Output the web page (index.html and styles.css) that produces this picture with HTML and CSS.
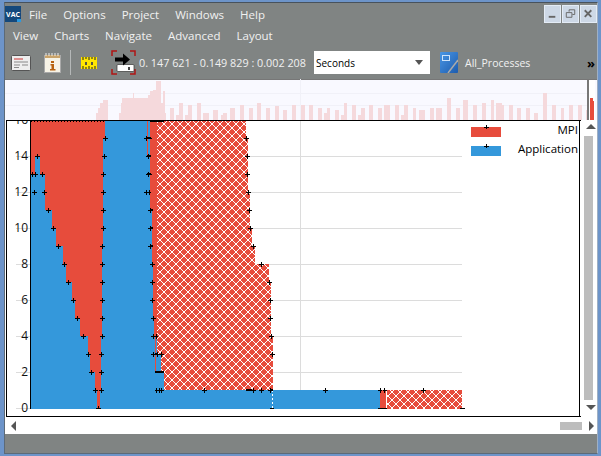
FILE: index.html
```html
<!DOCTYPE html>
<html lang="en">
<head>
<meta charset="UTF-8">
<title>Vampir</title>
<link rel="stylesheet" href="styles.css">
</head>
<body>
<div class="window">
<div class="menu-row main-menu">
<svg class="logo" width="16" height="16" viewBox="0 0 16 16"><rect width="16" height="16" fill="#14487c"/><rect x="12" y="13" width="4" height="3" fill="#2a9ae0"/><text x="8" y="11" class="logo-text">VAC</text></svg>
<span class="menu-item">File</span>
<span class="menu-item">Options</span>
<span class="menu-item">Project</span>
<span class="menu-item">Windows</span>
<span class="menu-item">Help</span>
<div class="win-btns">
<div class="win-btn"><svg width="16" height="16" viewBox="0 0 16 16"><rect x="4" y="10" width="7" height="2" fill="#666"/></svg></div>
<div class="win-btn"><svg width="16" height="16" viewBox="0 0 16 16"><path d="M6.500 5.500V3.500H12.500V8.500H10M3.500 6.500H9.500V11.500H3.500Z" fill="none" stroke="#666"/></svg></div>
<div class="win-btn"><svg width="16" height="16" viewBox="0 0 16 16"><path d="M4 4L11 11M11 4L4 11" stroke="#666" stroke-width="2"/></svg></div>
</div>
</div>
<div class="menu-row sub-menu">
<span class="menu-item">View</span>
<span class="menu-item">Charts</span>
<span class="menu-item">Navigate</span>
<span class="menu-item">Advanced</span>
<span class="menu-item">Layout</span>
</div>
<div class="toolbar">
<svg class="tb-card" width="20" height="16" viewBox="0 0 20 16"><rect x=".5" y=".5" width="19" height="15" rx="1" fill="#eee" stroke="#555"/><path d="M3 4H12" stroke="#c33"/><path d="M3 7H17M3 10H9M11 10H17M3 12.500H8" stroke="#888"/></svg>
<svg class="tb-info" width="17" height="20" viewBox="0 0 17 20"><rect x=".5" y="2.500" width="16" height="17" fill="#f7f3e6" stroke="#aaa"/><rect x="1" y="2" width="15" height="3" fill="#c9a36a"/><path d="M2 0V3M5 0V3M8 0V3M11 0V3M14 0V3" stroke="#eee"/><path d="M7 8H10V10H7ZM6.500 11H10V16H11.500V17.500H6V16H7.500V12.500H6.500Z" fill="#b8620f"/></svg>
<div class="tb-sep"></div>
<svg class="tb-ruler" width="16" height="12" viewBox="0 0 16 12"><rect width="16" height="12" fill="#ffe600"/><path d="M2 0V3M5 0V2M8 0V3M11 0V2M14 0V3M2 12V9M5 12V10M8 12V9M11 12V10M14 12V9" stroke="#222"/><rect x="4" y="5" width="2" height="3" fill="#554"/><rect x="10" y="5" width="2" height="3" fill="#554"/></svg>
<svg class="tb-zoom" width="25" height="25" viewBox="0 0 25 25"><path d="M1 6V1H6M19 1H24V6M1 19V24H6M19 24H24V19" fill="none" stroke="#b01515" stroke-width="1.500"/><rect x="6" y="14.500" width="17" height="7" rx="1" fill="#fff" stroke="#333" stroke-width=".7"/><rect x="17" y="17" width="2" height="3" fill="#444"/><path d="M4 7.500H12V3.500L19 9.500L12 15.500V11.500H4Z" fill="#000"/></svg>
<span class="time-range">0. 147 621 - 0.149 829 : 0.002 208</span>
<div class="combo"><span>Seconds</span><i class="combo-arrow"></i></div>
<svg class="tb-procs" width="18" height="21" viewBox="0 0 18 21"><defs><linearGradient id="procs-fill" x1="0" y1="0" x2="1" y2="1"><stop offset="0" stop-color="#4a96e4"/><stop offset="1" stop-color="#1d5cae"/></linearGradient></defs><rect width="18" height="21" rx="1" fill="url(#procs-fill)"/><rect x="2.500" y="3.500" width="7" height="5" fill="none" stroke="#cfe4fa"/><path d="M8 21L18 8" stroke="#aaa" stroke-width="1.500"/></svg>
<span class="procs-label">All_Processes</span>
<span class="more">»</span>
</div>
<div class="overview">
<svg width="592" height="41" viewBox="5 79 592 41">
<rect x="5" y="79" width="592" height="41" fill="#f9f9ff"/>
<rect x="5" y="79" width="592" height="1" fill="#777"/>
<path d="M5 93H587M5 105H587M300 79V120" stroke="#f1f1f8" fill="none"/>
<path fill="#f5d9dc" d="M96 120V113H98V108H100V103H103V100H108V120ZM119 120V113H121V103H122V98H133V93H134V98H148V95H150V91H153V90H156V81H161V103H163V91H165V113H166V120ZM170 120V108H174V120ZM176 120V115H179V103H183V120ZM185 120V115H188V105H192V120ZM197 120V103H201V120ZM203 120V113H209V120ZM213 120V110H218V120ZM221 120V115H223V113H227V120ZM230 120V108H235V120ZM240 120V105H244V120ZM249 120V108H253V120ZM257 120V103H261V120ZM266 120V108H270V120ZM275 120V106H279V120ZM283 120V110H287V120ZM292 120V105H296V120ZM301 120V105H305V120ZM309 120V105H313V120ZM318 120V108H322V120ZM324 120V113H327V108H330V120ZM335 120V110H339V120ZM341 120V115H344V103H347V120ZM352 120V105H356V120ZM358 120V115H361V108H365V120ZM369 120V105H373V120ZM378 120V108H382V120ZM384 120V105H390V120ZM395 120V105H399V120ZM401 120V115H404V105H408V120ZM413 120V108H416V120ZM419 120V110H425V120ZM430 120V108H434V120ZM436 120V108H442V120ZM447 120V98H451V120ZM456 120V108H460V120ZM463 120V100H468V120ZM473 120V105H477V120ZM482 120V103H486V120ZM491 120V100H494V120ZM496 120V103H502V105H504V120ZM509 120V105H513V120ZM517 120V108H521V120ZM526 120V108H530V120ZM534 120V113H538V120ZM543 120V93H547V120ZM552 120V105H556V120ZM561 120V108H564V120ZM569 120V105H573V120ZM578 120V105H582V120ZM586 120V110H587V120Z"/>
<rect x="589" y="80" width="6" height="40" fill="#fff"/>
<rect x="587" y="79" width="2" height="41" fill="#777"/>
<path fill="#e74c3c" d="M590 120V98H593V101H594V120Z"/>
</svg>
</div>
<div class="chart-row">
<svg class="chart" width="575" height="297" viewBox="6 120 575 297">
<defs>
<pattern id="hatch" width="8" height="8" patternUnits="userSpaceOnUse">
<rect width="8" height="8" fill="#e74c3c"/>
<path d="M0 0h1v1h-1zM1 1h1v1h-1zM2 2h1v1h-1zM3 3h1v1h-1zM4 4h1v1h-1zM5 5h1v1h-1zM6 6h1v1h-1zM7 7h1v1h-1zM7 0h1v1h-1zM6 1h1v1h-1zM5 2h1v1h-1zM4 3h1v1h-1zM3 4h1v1h-1zM2 5h1v1h-1zM1 6h1v1h-1zM0 7h1v1h-1z" fill="#fff"/>
</pattern>
</defs>
<rect x="6" y="120" width="575" height="297" fill="#fff"/>
<path class="grid" d="M16 156H462M16 192H462M16 228H462M16 264H462M16 300H462M16 336H462M16 372H462M16 408H30M300 120V390"/>
<g class="tick">
<text x="28" y="124">16</text>
<text x="28" y="160">14</text>
<text x="28" y="196">12</text>
<text x="28" y="232">10</text>
<text x="28" y="268">8</text>
<text x="28" y="304">6</text>
<text x="28" y="340">4</text>
<text x="28" y="376">2</text>
<text x="28" y="412">0</text>
</g>
<!-- application, whole area first, mpi and hatch go on top -->
<path fill="#3498db" d="M31 120H157V354H161V372H164V390H380V409H31Z"/>
<path fill="#e74c3c" d="M31 120H105V138H103V246H102V336H101V390H100V409H97V390H95V372H90V354H88V336H80V318H75V300H72V282H66V264H63V246H56V228H52V210H45V174H40V156H35V174H31Z"/>
<path fill="#e74c3c" d="M150 120H157V336H154V318H153V264H152V210H150Z"/>
<path fill="#e74c3c" d="M147 120H148V156H147Z"/>
<path fill="#e74c3c" d="M155 336H156V372H155Z"/>
<path fill="url(#hatch)" d="M157 120H246V138H248V192H250V228H252V246H255V264H269V282H271V336H273V390H164V372H161V354H157Z"/>
<path fill="#e74c3c" d="M380 390H386V409H380Z"/>
<path fill="url(#hatch)" d="M387 390H462V409H387Z"/>
<path d="M272.500 390V408" stroke="#fff" stroke-dasharray="2 2"/>
<!-- event marks -->
<path class="marks" d="M103 138h5M105.500 136v5M144 138h8M146.500 136v5M35 156h5M37.500 154v5M102 156h5M104.500 154v5M146 156h5M148 156h3M148.500 154v5M30 174h5M32.500 172v5M33 174h5M35.500 172v5M40 174h5M42.500 172v5M101 174h5M103.500 172v5M146 174h6M148.500 172v5M32 192h5M34.500 190v5M42 192h5M44.500 190v5M101 192h5M103.500 190v5M144 192h7M146.500 190v5M149.500 190v5M46 210h5M48.500 208v5M101 210h5M103.500 208v5M148 210h5M150.500 208v5M51 228h5M53.500 226v5M101 228h5M103.500 226v5M148 228h5M150.500 226v5M56 246h5M58.500 244v5M100 246h5M102.500 244v5M148 246h5M150.500 244v5M62 264h5M64.500 262v5M100 264h5M102.500 262v5M150 264h5M152.500 262v5M66 282h5M68.500 280v5M100 282h5M102.500 280v5M150 282h5M152.500 280v5M71 300h5M73.500 298v5M100 300h5M102.500 298v5M150 300h5M152.500 298v5M75 318h5M77.500 316v5M100 318h5M102.500 316v5M151 318h5M153.500 316v5M81 336h5M83.500 334v5M100 336h5M102.500 334v5M151 336h7M153.500 334v5M156.500 334v5M86 354h5M88.500 352v5M99 354h5M101.500 352v5M151 354h13M153.500 352v5M157.500 352v5M161.500 352v5M89 372h5M91.500 370v5M99 372h5M101.500 370v5M93 390h5M95.500 388v5M99 390h5M101.500 388v5M155 390h9M156.500 388v5M159.500 388v5M161.500 388v5M202 390h5M204.500 388v5M251 390h5M253.500 388v5M259 390h5M261.500 388v5M268 390h5M270.500 388v5M323 390h5M325.500 388v5M378 390h4M380.500 388v5M383 390h4M384.500 388v5M421 390h5M423.500 388v5M96 408h5M98.500 406v3M270 408h4M378 408h9M460 408h5M244 138h5M246.500 136v5M245 156h5M247.500 154v5M245 174h5M247.500 172v5M246 192h5M248.500 190v5M247 210h5M249.500 208v5M248 228h5M250.500 226v5M251 246h5M253.500 244v5M259 264h5M261.500 262v5M267 282h5M269.500 280v5M268 300h5M270.500 298v5M268 318h5M270.500 316v5M269 336h5M271.500 334v5M270 354h5M272.500 352v5"/>
<path class="marks thick" d="M147 138h4M147 156h4M147 174h4M150 210h3M150 228h3M150 246h3M155 354h3M155 372h9M246 390h6M270 390h3"/>
<path class="marks top-marks" d="M31 121.500H104" stroke-dasharray="1 2"/>
<path class="marks thick" d="M150 121H164"/>
<path class="axis" d="M30.500 120V409M6 120.500H581M6.500 120V417M579.500 120V417M6 416.500H581"/>
<rect x="471" y="127" width="30" height="10" fill="#e74c3c"/>
<rect x="471" y="146" width="30" height="10" fill="#3498db"/>
<path class="marks" d="M484 127h5M486.500 125v4M484 146h5M486.500 144v4"/>
<text class="legend" x="578" y="134">MPI</text>
<text class="legend" x="578" y="153">Application</text>
</svg>
<div class="v-scroll">
<i class="arrow-up"></i>
<div class="v-thumb"></div>
<i class="arrow-down"></i>
</div>
</div>
<div class="h-scroll">
<i class="arrow-left"></i>
<div class="h-thumb"></div>
<i class="arrow-right"></i>
</div>
<div class="status"></div>
</div>
</body>
</html>
```

FILE: styles.css
```css
html,body{
margin:0;
padding:0;
width:601px;
height:456px;
overflow:hidden;
background:#6d94c9;
}
*{font-family:"Open Sans","Noto Sans",sans-serif;}
.window{
box-sizing:border-box;
width:594px;
height:452px;
margin:2px 0 0 4px;
padding-top:1px;
border:1px solid #5c6a78;
border-top-color:#48525c;
border-right-color:#9fb0c4;
background:#808483;
color:#f1f1f1;
font-size:11.5px;
display:flex;
flex-direction:column;
}
.menu-row{
display:flex;
align-items:center;
flex:none;
}
.main-menu{
height:20px;
gap:16px;
}
.sub-menu{
height:22px;
padding-left:8px;
gap:16px;
}
.logo{margin-right:-8px;}
.logo-text{
fill:#fff;
font-size:7px;
font-weight:700;
text-anchor:middle;
}
.win-btns{
margin-left:auto;
display:flex;
gap:1px;
}
.win-btn{
width:17px;
height:18px;
border:1px solid #e4ecf6;
box-sizing:border-box;
background:#cdd8e6;
display:flex;
align-items:center;
justify-content:center;
}
.toolbar{
height:33px;
flex:none;
display:flex;
align-items:center;
}
.tb-card{margin-left:6px;}
.tb-info{margin-left:13px;}
.tb-sep{
width:1px;
height:25px;
margin-left:9px;
background:#b5b8b8;
}
.tb-ruler{margin-left:10px;}
.tb-zoom{margin-left:14px;}
.time-range{
margin-left:3px;
width:175px;
font-size:10.8px;
white-space:nowrap;
}
.combo{
box-sizing:border-box;
width:116px;
height:23px;
background:#fff;
color:#000;
font-size:10px;
display:flex;
align-items:center;
justify-content:space-between;
padding:0 7px 0 2px;
}
.combo-arrow{
width:0;
height:0;
border-left:4px solid transparent;
border-right:4px solid transparent;
border-top:5px solid #555;
}
.tb-procs{margin-left:10px;}
.procs-label{margin-left:7px;font-size:10.5px;}
.more{
margin-left:auto;
margin-right:2px;
color:#000;
font-size:13px;
font-weight:700;
}
.overview{
height:41px;
flex:none;
}
.overview svg,.chart{display:block;}
.overview path,.chart path{shape-rendering:crispEdges;}
.chart-row{
display:flex;
flex:none;
height:297px;
background:#fff;
}
.chart{margin-left:1px;flex:none;}
.grid{
stroke:#dcdcdc;
fill:none;
}
.tick text{
fill:#111;
font-size:12px;
text-anchor:end;
}
.marks{
stroke:#000;
fill:none;
}
.thick{stroke-width:2;}
.axis{
stroke:#000;
fill:none;
}
.legend{
fill:#000;
font-size:11.5px;
text-anchor:end;
}
.v-scroll{
flex:1;
display:flex;
flex-direction:column;
align-items:flex-start;
padding:4px 0 7px 3px;
box-sizing:border-box;
}
.arrow-up,.arrow-down,.arrow-left,.arrow-right{
width:0;
height:0;
display:block;
flex:none;
}
.arrow-up{
border-left:5px solid transparent;
border-right:5px solid transparent;
border-bottom:5px solid #555;
margin-left:2px;
}
.arrow-down{
border-left:5px solid transparent;
border-right:5px solid transparent;
border-top:5px solid #555;
margin-left:2px;
}
.v-thumb{
width:9px;
flex:1;
margin:7px 0 5px;
background:#bdbdbd;
}
.h-scroll{
height:17px;
flex:none;
background:#fff;
display:flex;
align-items:center;
padding:0 3px 0 6px;
box-sizing:border-box;
}
.arrow-left{
border-top:5px solid transparent;
border-bottom:5px solid transparent;
border-right:5px solid #555;
}
.h-thumb{
width:22px;
height:8px;
margin-left:auto;
margin-right:7px;
background:#bdbdbd;
}
.arrow-right{
border-top:5px solid transparent;
border-bottom:5px solid transparent;
border-left:5px solid #555;
}
.status{
flex:1;
background:#808483;
}
```
